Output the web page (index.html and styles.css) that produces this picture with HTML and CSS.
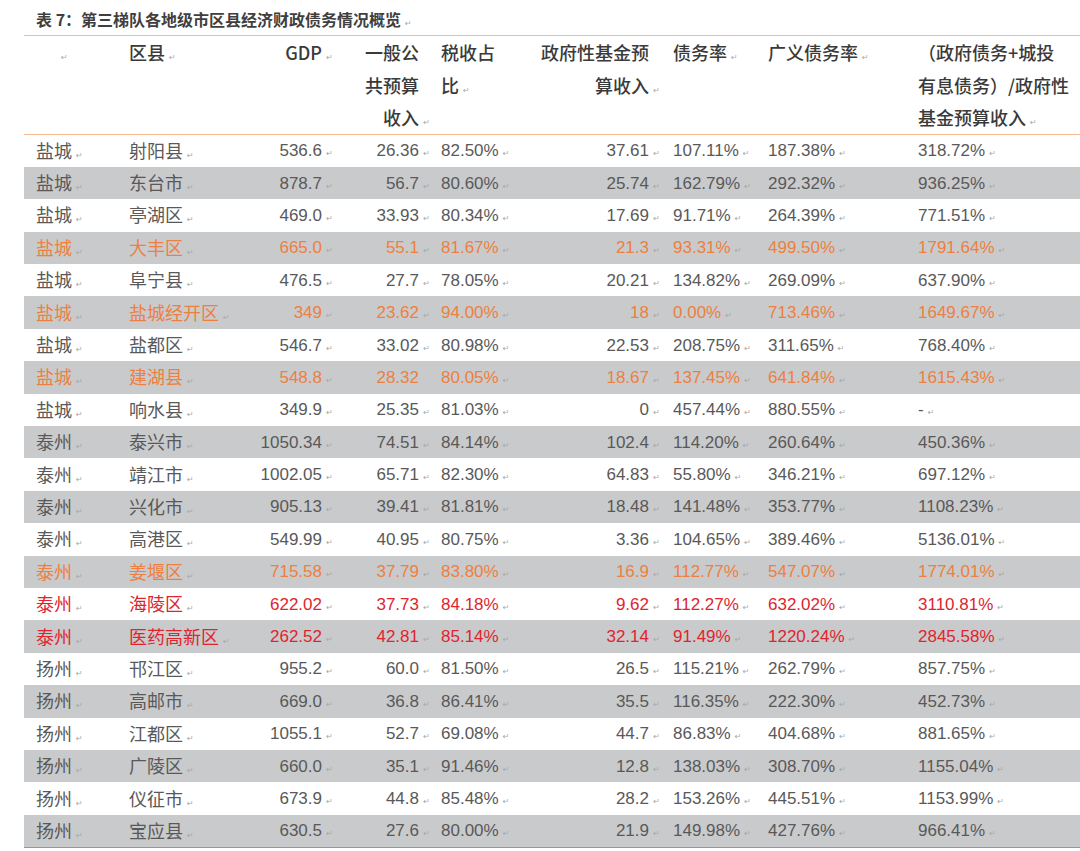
FILE: index.html
```html
<!DOCTYPE html>
<html lang="zh">
<head>
<meta charset="utf-8">
<title>表7</title>
<link rel="stylesheet" href="styles.css">
</head>
<body>
<div class="caption">表 7：第三梯队各地级市区县经济财政债务情况概览<span class="m">↵</span></div>
<table class="data">
<colgroup>
<col class="w1"><col class="w2"><col class="w3"><col class="w4"><col class="w5"><col class="w6"><col class="w7"><col class="w8"><col class="w9">
</colgroup>
<thead>
<tr>
<th class="c1 h1"><span class="m">↵</span></th>
<th class="c2">区县<span class="m">↵</span></th>
<th class="c3">GDP<span class="m">↵</span></th>
<th class="c4">一般公<br>共预算<br>收入<span class="m">↵</span></th>
<th class="c5">税收占<br>比<span class="m">↵</span></th>
<th class="c6">政府性基金预<br>算收入<span class="m">↵</span></th>
<th class="c7">债务率<span class="m">↵</span></th>
<th class="c8">广义债务率<span class="m">↵</span></th>
<th class="c9">（政府债务+城投<br>有息债务）/政府性<br>基金预算收入<span class="m">↵</span></th>
</tr>
</thead>
<tbody>
<tr><td class="c1">盐城<span class="m">↵</span></td><td class="c2">射阳县<span class="m">↵</span></td><td class="c3">536.6<span class="m">↵</span></td><td class="c4">26.36<span class="m">↵</span></td><td class="c5">82.50%<span class="m">↵</span></td><td class="c6">37.61<span class="m">↵</span></td><td class="c7">107.11%<span class="m">↵</span></td><td class="c8">187.38%<span class="m">↵</span></td><td class="c9">318.72%<span class="m">↵</span></td></tr>
<tr class="g"><td class="c1">盐城<span class="m">↵</span></td><td class="c2">东台市<span class="m">↵</span></td><td class="c3">878.7<span class="m">↵</span></td><td class="c4">56.7<span class="m">↵</span></td><td class="c5">80.60%<span class="m">↵</span></td><td class="c6">25.74<span class="m">↵</span></td><td class="c7">162.79%<span class="m">↵</span></td><td class="c8">292.32%<span class="m">↵</span></td><td class="c9">936.25%<span class="m">↵</span></td></tr>
<tr><td class="c1">盐城<span class="m">↵</span></td><td class="c2">亭湖区<span class="m">↵</span></td><td class="c3">469.0<span class="m">↵</span></td><td class="c4">33.93<span class="m">↵</span></td><td class="c5">80.34%<span class="m">↵</span></td><td class="c6">17.69<span class="m">↵</span></td><td class="c7">91.71%<span class="m">↵</span></td><td class="c8">264.39%<span class="m">↵</span></td><td class="c9">771.51%<span class="m">↵</span></td></tr>
<tr class="g o"><td class="c1">盐城<span class="m">↵</span></td><td class="c2">大丰区<span class="m">↵</span></td><td class="c3">665.0<span class="m">↵</span></td><td class="c4">55.1<span class="m">↵</span></td><td class="c5">81.67%<span class="m">↵</span></td><td class="c6">21.3<span class="m">↵</span></td><td class="c7">93.31%<span class="m">↵</span></td><td class="c8">499.50%<span class="m">↵</span></td><td class="c9">1791.64%<span class="m">↵</span></td></tr>
<tr><td class="c1">盐城<span class="m">↵</span></td><td class="c2">阜宁县<span class="m">↵</span></td><td class="c3">476.5<span class="m">↵</span></td><td class="c4">27.7<span class="m">↵</span></td><td class="c5">78.05%<span class="m">↵</span></td><td class="c6">20.21<span class="m">↵</span></td><td class="c7">134.82%<span class="m">↵</span></td><td class="c8">269.09%<span class="m">↵</span></td><td class="c9">637.90%<span class="m">↵</span></td></tr>
<tr class="g o"><td class="c1">盐城<span class="m">↵</span></td><td class="c2">盐城经开区<span class="m">↵</span></td><td class="c3">349<span class="m">↵</span></td><td class="c4">23.62<span class="m">↵</span></td><td class="c5">94.00%<span class="m">↵</span></td><td class="c6">18<span class="m">↵</span></td><td class="c7">0.00%<span class="m">↵</span></td><td class="c8">713.46%<span class="m">↵</span></td><td class="c9">1649.67%<span class="m">↵</span></td></tr>
<tr><td class="c1">盐城<span class="m">↵</span></td><td class="c2">盐都区<span class="m">↵</span></td><td class="c3">546.7<span class="m">↵</span></td><td class="c4">33.02<span class="m">↵</span></td><td class="c5">80.98%<span class="m">↵</span></td><td class="c6">22.53<span class="m">↵</span></td><td class="c7">208.75%<span class="m">↵</span></td><td class="c8">311.65%<span class="m">↵</span></td><td class="c9">768.40%<span class="m">↵</span></td></tr>
<tr class="g o"><td class="c1">盐城<span class="m">↵</span></td><td class="c2">建湖县<span class="m">↵</span></td><td class="c3">548.8<span class="m">↵</span></td><td class="c4">28.32<span class="m x">↵</span></td><td class="c5">80.05%<span class="m">↵</span></td><td class="c6">18.67<span class="m">↵</span></td><td class="c7">137.45%<span class="m">↵</span></td><td class="c8">641.84%<span class="m">↵</span></td><td class="c9">1615.43%<span class="m">↵</span></td></tr>
<tr><td class="c1">盐城<span class="m">↵</span></td><td class="c2">响水县<span class="m">↵</span></td><td class="c3">349.9<span class="m">↵</span></td><td class="c4">25.35<span class="m">↵</span></td><td class="c5">81.03%<span class="m">↵</span></td><td class="c6">0<span class="m">↵</span></td><td class="c7">457.44%<span class="m">↵</span></td><td class="c8">880.55%<span class="m">↵</span></td><td class="c9">-<span class="m">↵</span></td></tr>
<tr class="g"><td class="c1">泰州<span class="m">↵</span></td><td class="c2">泰兴市<span class="m">↵</span></td><td class="c3">1050.34<span class="m">↵</span></td><td class="c4">74.51<span class="m">↵</span></td><td class="c5">84.14%<span class="m">↵</span></td><td class="c6">102.4<span class="m">↵</span></td><td class="c7">114.20%<span class="m">↵</span></td><td class="c8">260.64%<span class="m">↵</span></td><td class="c9">450.36%<span class="m">↵</span></td></tr>
<tr><td class="c1">泰州<span class="m">↵</span></td><td class="c2">靖江市<span class="m">↵</span></td><td class="c3">1002.05<span class="m">↵</span></td><td class="c4">65.71<span class="m">↵</span></td><td class="c5">82.30%<span class="m">↵</span></td><td class="c6">64.83<span class="m">↵</span></td><td class="c7">55.80%<span class="m">↵</span></td><td class="c8">346.21%<span class="m">↵</span></td><td class="c9">697.12%<span class="m">↵</span></td></tr>
<tr class="g"><td class="c1">泰州<span class="m">↵</span></td><td class="c2">兴化市<span class="m">↵</span></td><td class="c3">905.13<span class="m">↵</span></td><td class="c4">39.41<span class="m">↵</span></td><td class="c5">81.81%<span class="m">↵</span></td><td class="c6">18.48<span class="m">↵</span></td><td class="c7">141.48%<span class="m">↵</span></td><td class="c8">353.77%<span class="m">↵</span></td><td class="c9">1108.23%<span class="m">↵</span></td></tr>
<tr><td class="c1">泰州<span class="m">↵</span></td><td class="c2">高港区<span class="m">↵</span></td><td class="c3">549.99<span class="m">↵</span></td><td class="c4">40.95<span class="m">↵</span></td><td class="c5">80.75%<span class="m">↵</span></td><td class="c6">3.36<span class="m">↵</span></td><td class="c7">104.65%<span class="m">↵</span></td><td class="c8">389.46%<span class="m">↵</span></td><td class="c9">5136.01%<span class="m">↵</span></td></tr>
<tr class="g o"><td class="c1">泰州<span class="m">↵</span></td><td class="c2">姜堰区<span class="m">↵</span></td><td class="c3">715.58<span class="m">↵</span></td><td class="c4">37.79<span class="m">↵</span></td><td class="c5">83.80%<span class="m">↵</span></td><td class="c6">16.9<span class="m">↵</span></td><td class="c7">112.77%<span class="m">↵</span></td><td class="c8">547.07%<span class="m">↵</span></td><td class="c9">1774.01%<span class="m">↵</span></td></tr>
<tr class="r"><td class="c1">泰州<span class="m">↵</span></td><td class="c2">海陵区<span class="m">↵</span></td><td class="c3">622.02<span class="m">↵</span></td><td class="c4">37.73<span class="m">↵</span></td><td class="c5">84.18%<span class="m">↵</span></td><td class="c6">9.62<span class="m">↵</span></td><td class="c7">112.27%<span class="m">↵</span></td><td class="c8">632.02%<span class="m">↵</span></td><td class="c9">3110.81%<span class="m">↵</span></td></tr>
<tr class="g r"><td class="c1">泰州<span class="m">↵</span></td><td class="c2">医药高新区<span class="m">↵</span></td><td class="c3">262.52<span class="m">↵</span></td><td class="c4">42.81<span class="m">↵</span></td><td class="c5">85.14%<span class="m">↵</span></td><td class="c6">32.14<span class="m">↵</span></td><td class="c7">91.49%<span class="m">↵</span></td><td class="c8">1220.24%<span class="m">↵</span></td><td class="c9">2845.58%<span class="m">↵</span></td></tr>
<tr><td class="c1">扬州<span class="m">↵</span></td><td class="c2">邗江区<span class="m">↵</span></td><td class="c3">955.2<span class="m">↵</span></td><td class="c4">60.0<span class="m">↵</span></td><td class="c5">81.50%<span class="m">↵</span></td><td class="c6">26.5<span class="m">↵</span></td><td class="c7">115.21%<span class="m">↵</span></td><td class="c8">262.79%<span class="m">↵</span></td><td class="c9">857.75%<span class="m">↵</span></td></tr>
<tr class="g"><td class="c1">扬州<span class="m">↵</span></td><td class="c2">高邮市<span class="m">↵</span></td><td class="c3">669.0<span class="m">↵</span></td><td class="c4">36.8<span class="m">↵</span></td><td class="c5">86.41%<span class="m">↵</span></td><td class="c6">35.5<span class="m">↵</span></td><td class="c7">116.35%<span class="m">↵</span></td><td class="c8">222.30%<span class="m">↵</span></td><td class="c9">452.73%<span class="m">↵</span></td></tr>
<tr><td class="c1">扬州<span class="m">↵</span></td><td class="c2">江都区<span class="m">↵</span></td><td class="c3">1055.1<span class="m">↵</span></td><td class="c4">52.7<span class="m">↵</span></td><td class="c5">69.08%<span class="m">↵</span></td><td class="c6">44.7<span class="m">↵</span></td><td class="c7">86.83%<span class="m">↵</span></td><td class="c8">404.68%<span class="m">↵</span></td><td class="c9">881.65%<span class="m">↵</span></td></tr>
<tr class="g"><td class="c1">扬州<span class="m">↵</span></td><td class="c2">广陵区<span class="m">↵</span></td><td class="c3">660.0<span class="m">↵</span></td><td class="c4">35.1<span class="m">↵</span></td><td class="c5">91.46%<span class="m">↵</span></td><td class="c6">12.8<span class="m">↵</span></td><td class="c7">138.03%<span class="m">↵</span></td><td class="c8">308.70%<span class="m">↵</span></td><td class="c9">1155.04%<span class="m">↵</span></td></tr>
<tr><td class="c1">扬州<span class="m">↵</span></td><td class="c2">仪征市<span class="m">↵</span></td><td class="c3">673.9<span class="m">↵</span></td><td class="c4">44.8<span class="m">↵</span></td><td class="c5">85.48%<span class="m">↵</span></td><td class="c6">28.2<span class="m">↵</span></td><td class="c7">153.26%<span class="m">↵</span></td><td class="c8">445.51%<span class="m">↵</span></td><td class="c9">1153.99%<span class="m">↵</span></td></tr>
<tr class="g"><td class="c1">扬州<span class="m">↵</span></td><td class="c2">宝应县<span class="m">↵</span></td><td class="c3">630.5<span class="m">↵</span></td><td class="c4">27.6<span class="m">↵</span></td><td class="c5">80.00%<span class="m">↵</span></td><td class="c6">21.9<span class="m">↵</span></td><td class="c7">149.98%<span class="m">↵</span></td><td class="c8">427.76%<span class="m">↵</span></td><td class="c9">966.41%<span class="m">↵</span></td></tr>
</tbody>
</table>
</body>
</html>
```
FILE: styles.css
```css
html, body {
  margin: 0;
  padding: 0;
  background: #ffffff;
}
body {
  font-family: "Liberation Sans", "Noto Sans CJK SC", sans-serif;
  color: #595959;
  width: 1080px;
  overflow: hidden;
}
.caption {
  height: 35px;
  box-sizing: border-box;
  padding: 3px 0 0 36px;
  line-height: 32px;
  font-size: 16px;
  font-weight: bold;
  color: #3f3f3f;
  font-family: "Noto Sans CJK SC", "Liberation Sans", sans-serif;
  white-space: nowrap;
}
.m {
  display: inline-block;
  width: 7px;
  font-family: "DejaVu Sans", sans-serif;
  font-size: 8px;
  font-weight: normal;
  line-height: 0;
  color: #a8a8a8;
  margin-left: 4px;
  vertical-align: 0;
}
.m.x { visibility: hidden; }
table.data {
  margin-left: 24px;
  width: 1056px;
  table-layout: fixed;
  border-collapse: collapse;
  border-top: 1.5px solid #f5b98f;
  border-bottom: 1.5px solid #ed7d31;
}
.w1 { width: 96px; }
.w2 { width: 130px; }
.w3 { width: 85px; }
.w4 { width: 103px; }
.w5 { width: 92px; }
.w6 { width: 132px; }
.w7 { width: 98px; }
.w8 { width: 150px; }
.w9 { width: 170px; }
thead th {
  font-family: "Noto Sans CJK SC", "Liberation Sans", sans-serif;
  font-size: 18px;
  font-weight: 500;
  color: #3a3a3a;
  line-height: 32.5px;
  vertical-align: top;
  padding-top: 0;
  padding-bottom: 0;
  height: 97px;
  white-space: nowrap;
  border-bottom: 1.5px solid #f5b98f;
}
tbody td {
  height: 31.4px;
  padding-top: 1px;
  padding-bottom: 0;
  font-size: 17px;
  line-height: 20px;
  vertical-align: middle;
  white-space: nowrap;
}
tbody td.c1, tbody td.c2 {
  font-family: "Noto Sans CJK SC", "Liberation Sans", sans-serif;
  font-size: 18px;
  height: 30.4px;
  padding-top: 0;
  padding-bottom: 2px;
}
.c1 { text-align: left; padding-left: 12px; padding-right: 0; }
.h1 { padding-left: 33px; }
.c2 { text-align: left; padding-left: 9px; padding-right: 0; }
.c3 { text-align: right; padding-right: 13px; padding-left: 0; }
.c4 { text-align: right; padding-right: 19px; padding-left: 0; }
.c5 { text-align: left; padding-left: 3px; padding-right: 0; }
.c6 { text-align: right; padding-right: 13px; padding-left: 0; }
.c3 .m, .c4 .m, .c6 .m { margin-right: -11px; }
.c7 { text-align: left; padding-left: 11px; padding-right: 0; }
.c8 { text-align: left; padding-left: 8px; padding-right: 0; }
.c9 { text-align: left; padding-left: 8px; padding-right: 0; }
tr.g td { background: #c9cacc; }
tr.o td { color: #ed8040; }
tr.r td { color: #e0242f; }
```
